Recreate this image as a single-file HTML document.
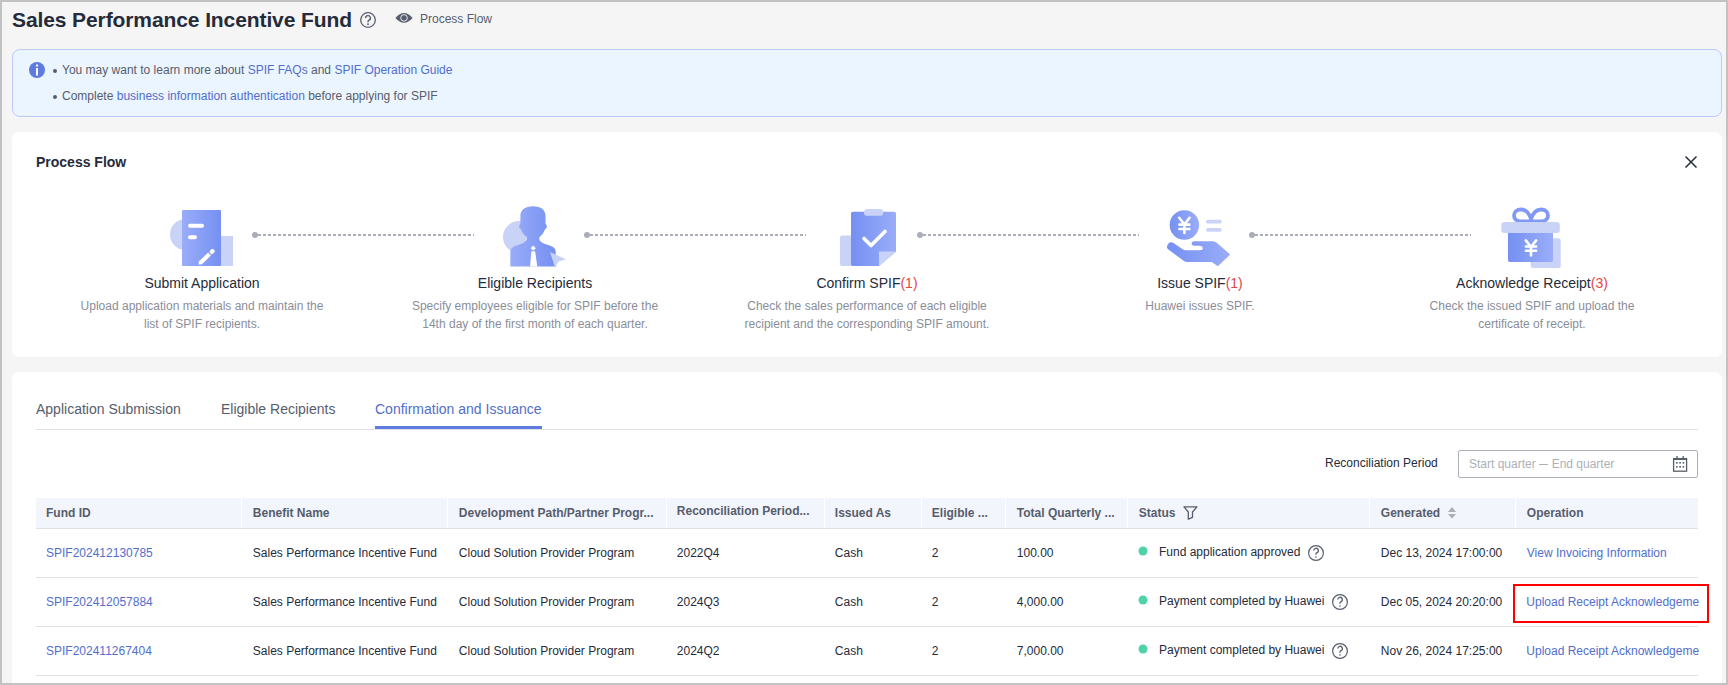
<!DOCTYPE html>
<html><head><meta charset="utf-8">
<style>
*{margin:0;padding:0;box-sizing:border-box}
html,body{width:1728px;height:685px;overflow:hidden}
body{position:relative;background:#c2c2c2;font-family:"Liberation Sans",sans-serif;color:#252b3a}
.a{position:absolute;white-space:nowrap}
#page{position:absolute;left:2px;top:2px;width:1724px;height:681px;background:#f5f5f5;overflow:hidden}
.link,.td.link{color:#526ecc}
.card{position:absolute;background:#fff;border-radius:7px}
.t12{font-size:12px;line-height:16px}
.t14{font-size:14px;line-height:18px}
.desc{position:absolute;width:250px;color:#8a8e99;font-size:12px;line-height:18px;text-align:center;white-space:normal}
.stitle{position:absolute;width:300px;font-size:14px;line-height:18px;text-align:center;color:#252b3a}
.cnt{color:#e54545}
.th{position:absolute;top:505px;font-size:12px;line-height:16px;font-weight:bold;color:#575d6c;white-space:nowrap}
.td{position:absolute;font-size:12px;line-height:16px;color:#252b3a;white-space:nowrap}
.hsep{position:absolute;top:498px;width:1px;height:30px;background:#fff}
.rline{position:absolute;left:36px;width:1662px;height:1px;background:#dfe1e6}
svg{position:absolute;left:0;top:0;overflow:visible}
</style></head>
<body>
<div id="page"></div>

<!-- ===== Header ===== -->
<div class="a" style="left:12px;top:7px;font-size:21px;line-height:26px;font-weight:bold;color:#252b3a;letter-spacing:-0.1px">Sales Performance Incentive Fund</div>
<div class="a t12" style="left:420px;top:11px;color:#575d6c">Process Flow</div>

<!-- ===== Info box ===== -->
<div class="a" style="left:12px;top:49px;width:1710px;height:68px;background:#ebf5ff;border:1px solid #bdcafa;border-radius:8px"></div>
<div class="a t12" style="left:62px;top:62px;color:#575d6c">You may want to learn more about <span class="link">SPIF FAQs</span> and <span class="link">SPIF Operation Guide</span></div>
<div class="a t12" style="left:62px;top:88px;color:#575d6c">Complete <span class="link">business information authentication</span> before applying for SPIF</div>

<!-- ===== Process flow card ===== -->
<div class="card" style="left:12px;top:132px;width:1710px;height:225px"></div>
<div class="a" style="left:36px;top:153px;font-size:14px;line-height:18px;font-weight:bold;color:#252b3a">Process Flow</div>

<div class="stitle" style="left:52px;top:274px">Submit Application</div>
<div class="desc" style="left:77px;top:297px">Upload application materials and maintain the list of SPIF recipients.</div>
<div class="stitle" style="left:385px;top:274px">Eligible Recipients</div>
<div class="desc" style="left:410px;top:297px">Specify employees eligible for SPIF before the 14th day of the first month of each quarter.</div>
<div class="stitle" style="left:717px;top:274px">Confirm SPIF<span class="cnt">(1)</span></div>
<div class="desc" style="left:742px;top:297px">Check the sales performance of each eligible recipient and the corresponding SPIF amount.</div>
<div class="stitle" style="left:1050px;top:274px">Issue SPIF<span class="cnt">(1)</span></div>
<div class="desc" style="left:1075px;top:297px">Huawei issues SPIF.</div>
<div class="stitle" style="left:1382px;top:274px">Acknowledge Receipt<span class="cnt">(3)</span></div>
<div class="desc" style="left:1407px;top:297px">Check the issued SPIF and upload the certificate of receipt.</div>

<!-- ===== Tabs card ===== -->
<div class="card" style="left:12px;top:372px;width:1710px;height:340px"></div>
<div class="a t14" style="left:36px;top:400px;color:#575d6c">Application Submission</div>
<div class="a t14" style="left:221px;top:400px;color:#575d6c">Eligible Recipients</div>
<div class="a t14" style="left:375px;top:400px;color:#526ecc">Confirmation and Issuance</div>
<div class="a" style="left:36px;top:429px;width:1662px;height:1px;background:#dfe1e6"></div>
<div class="a" style="left:375px;top:426px;width:167px;height:3px;background:#5e7ce0"></div>

<div class="a t12" style="left:1325px;top:455px;color:#252b3a">Reconciliation Period</div>
<div class="a" style="left:1458px;top:450px;width:240px;height:28px;border:1px solid #adb0b8;border-radius:2px"></div>
<div class="a t12" style="left:1469px;top:456px;color:#adb0b8">Start quarter <span style="display:inline-block;width:9.3px;height:1px;background:#adb0b8;vertical-align:3.5px"></span> End quarter</div>

<!-- table header -->
<div class="a" style="left:36px;top:498px;width:1662px;height:30px;background:#f2f5fc"></div>
<div class="a" style="left:36px;top:528px;width:1662px;height:1px;background:#dfe1e6"></div>
<div class="hsep" style="left:241px"></div>
<div class="hsep" style="left:447px"></div>
<div class="hsep" style="left:666px"></div>
<div class="hsep" style="left:824px"></div>
<div class="hsep" style="left:921px"></div>
<div class="hsep" style="left:1005px"></div>
<div class="hsep" style="left:1127px"></div>
<div class="hsep" style="left:1369px"></div>
<div class="hsep" style="left:1515px"></div>

<div class="th" style="left:46px">Fund ID</div>
<div class="th" style="left:252.8px">Benefit Name</div>
<div class="th" style="left:458.8px">Development Path/Partner Progr...</div>
<div class="th" style="left:676.8px;top:503px">Reconciliation Period...</div>
<div class="th" style="left:834.8px">Issued As</div>
<div class="th" style="left:931.8px">Eligible ...</div>
<div class="th" style="left:1016.8px">Total Quarterly ...</div>
<div class="th" style="left:1138.8px">Status</div>
<div class="th" style="left:1380.8px">Generated</div>
<div class="th" style="left:1526.8px">Operation</div>

<!-- rows -->
<div class="rline" style="top:577px"></div>
<div class="rline" style="top:626px"></div>
<div class="rline" style="top:675px"></div>

<div class="td link" style="left:46px;top:545px">SPIF202412130785</div>
<div class="td" style="left:252.8px;top:545px">Sales Performance Incentive Fund</div>
<div class="td" style="left:458.8px;top:545px">Cloud Solution Provider Program</div>
<div class="td" style="left:676.8px;top:545px">2022Q4</div>
<div class="td" style="left:834.8px;top:545px">Cash</div>
<div class="td" style="left:931.8px;top:545px">2</div>
<div class="td" style="left:1016.8px;top:545px">100.00</div>
<div class="td" style="left:1159px;top:544px">Fund application approved</div>
<div class="td" style="left:1380.8px;top:545px">Dec 13, 2024 17:00:00</div>
<div class="td link" style="left:1526.8px;top:545px">View Invoicing Information</div>

<div class="td link" style="left:46px;top:594px">SPIF202412057884</div>
<div class="td" style="left:252.8px;top:594px">Sales Performance Incentive Fund</div>
<div class="td" style="left:458.8px;top:594px">Cloud Solution Provider Program</div>
<div class="td" style="left:676.8px;top:594px">2024Q3</div>
<div class="td" style="left:834.8px;top:594px">Cash</div>
<div class="td" style="left:931.8px;top:594px">2</div>
<div class="td" style="left:1016.8px;top:594px">4,000.00</div>
<div class="td" style="left:1159px;top:593px">Payment completed by Huawei</div>
<div class="td" style="left:1380.8px;top:594px">Dec 05, 2024 20:20:00</div>
<div class="a" style="left:1526.3px;top:594px;width:173px;overflow:hidden;font-size:12px;line-height:16px"><span class="link">Upload Receipt Acknowledgement</span></div>

<div class="td link" style="left:46px;top:643px">SPIF202411267404</div>
<div class="td" style="left:252.8px;top:643px">Sales Performance Incentive Fund</div>
<div class="td" style="left:458.8px;top:643px">Cloud Solution Provider Program</div>
<div class="td" style="left:676.8px;top:643px">2024Q2</div>
<div class="td" style="left:834.8px;top:643px">Cash</div>
<div class="td" style="left:931.8px;top:643px">2</div>
<div class="td" style="left:1016.8px;top:643px">7,000.00</div>
<div class="td" style="left:1159px;top:642px">Payment completed by Huawei</div>
<div class="td" style="left:1380.8px;top:643px">Nov 26, 2024 17:25:00</div>
<div class="a" style="left:1526.3px;top:643px;width:173px;overflow:hidden;font-size:12px;line-height:16px"><span class="link">Upload Receipt Acknowledgement</span></div>

<!-- red highlight -->
<div class="a" style="left:1513px;top:584px;width:196px;height:39px;border:2px solid #f00"></div>

<!-- ===== SVG overlay (icons) ===== -->
<svg width="1728" height="685" viewBox="0 0 1728 685">
<defs>
<linearGradient id="gL" x1="0" y1="0" x2="1" y2="0"><stop offset="0" stop-color="#9aadf9"/><stop offset="1" stop-color="#7590f2"/></linearGradient>
<linearGradient id="gR" x1="0" y1="0" x2="1" y2="0"><stop offset="0" stop-color="#7590f2"/><stop offset="1" stop-color="#9aadf9"/></linearGradient>
</defs>
<!-- title help icon -->
<circle cx="368" cy="20" r="7.3" fill="none" stroke="#575d6c" stroke-width="1.3"/>
<path d="M365.6 18a2.4 2.4 0 1 1 3.4 2.2c-.7.4-1 .8-1 1.6v.5" fill="none" stroke="#575d6c" stroke-width="1.4"/>
<rect x="367.2" y="23.4" width="1.6" height="1.6" fill="#575d6c"/>
<!-- eye -->
<path d="M395.4 17.9Q404 8.3 412.6 17.9Q404 27.5 395.4 17.9Z" fill="#575d6c"/>
<circle cx="404" cy="17.9" r="3.3" fill="none" stroke="#eaebef" stroke-width="1"/>
<circle cx="404" cy="17.9" r="2.2" fill="#575d6c"/>
<!-- info icon -->
<circle cx="37" cy="70" r="8" fill="#5e7ce0"/>
<rect x="36" y="64.5" width="2" height="2" fill="#fff"/>
<rect x="36" y="68" width="2" height="7.5" fill="#fff"/>
<circle cx="55" cy="71" r="2" fill="#575d6c"/>
<circle cx="55" cy="97" r="2" fill="#575d6c"/>

<!-- close X -->
<path d="M1685.5 156.5l11 11M1696.5 156.5l-11 11" stroke="#252b3a" stroke-width="1.5"/>

<!-- connectors -->
<g fill="#abaeb9">
<circle cx="255" cy="235" r="3"/><circle cx="587" cy="235" r="3"/><circle cx="920" cy="235" r="3"/><circle cx="1252" cy="235" r="3"/>
</g>
<g stroke="#abaeb9" stroke-width="2" stroke-dasharray="3 2">
<path d="M258 235H474"/><path d="M590 235H806"/><path d="M923 235H1139"/><path d="M1255 235H1471"/>
</g>

<!-- icon 1: submit application -->
<circle cx="185.5" cy="234.5" r="15.5" fill="#c9d3f8"/>
<rect x="221" y="236" width="12" height="30" fill="#c9d3f8"/>
<rect x="182" y="210" width="39" height="56" rx="1" fill="url(#gL)"/>
<rect x="188" y="223.8" width="16" height="4" rx="2" fill="#fff"/>
<rect x="188" y="235.2" width="9" height="4" rx="2" fill="#fff"/>
<g transform="translate(198.6 264.6) rotate(-44)" fill="#fff"><path d="M0 0L2.6-2.1H15.2V2.1H2.6Z"/><rect x="16.4" y="-2.1" width="5" height="4.2" rx="1.4"/></g>


<!-- icon 2: person -->
<circle cx="519" cy="237" r="16" fill="#c9d3f8"/>
<path d="M520.4 216C520.4 210 525 206.3 533 206.3S545.5 210 545.5 216V224C546.5 224.5 547 225.5 546.8 227 546.5 228.3 545.8 229 545 229.2 543.8 232.8 541.5 235.5 539.3 237.3V240C541 242 544 244 548 245 553 246.3 555.7 248.5 555.7 252V266.4H510.3V252C510.3 248.5 513 246.3 518 245 522 244 525 242 527 240V237.3C524.5 235.5 522.2 232.8 521 229.2 520.2 229 519.5 228.3 519.2 227 519 225.5 519.5 224.5 520.4 224Z" fill="url(#gL)"/>
<path d="M533.2 245.6L535.8 248.3 533.2 250.4 530.6 248.3Z" fill="#fff"/><path d="M531.3 251.2H535.1L537.3 266.4H530.1Z" fill="#fff"/>
<path d="M550.1 252.1L565.9 259.2 558.2 261.8 555.2 267.9Z" fill="#c9d3f8"/>

<!-- icon 3: clipboard -->
<rect x="840" y="235.6" width="14" height="30.4" rx="2" fill="#c9d3f8"/>
<path d="M853 211.7h41c1.2 0 2 .8 2 2v38l-17 14.3h-26c-1.2 0-2-.8-2-2v-50.3c0-1.2.8-2 2-2z" fill="url(#gR)"/>
<path d="M879 251.6h17l-17 14.4z" fill="#c9d3f8"/>
<rect x="864" y="209" width="19.3" height="6.8" rx="3.4" fill="#c9d3f8"/>
<path d="M864 238.5l7 7 14-14" fill="none" stroke="#fff" stroke-width="3.6" stroke-linecap="round" stroke-linejoin="round"/>

<!-- icon 4: hand + coin -->
<circle cx="1184.4" cy="225" r="14.7" fill="url(#gR)"/>
<path d="M1179.2 217.8l5.2 6.6 5.2-6.6M1184.4 224.4v8.6M1179.4 224.6h10M1179.4 229h10" fill="none" stroke="#fff" stroke-width="2.6" stroke-linecap="round"/>
<rect x="1206" y="219.7" width="15.7" height="3.9" rx="1.95" fill="#c9d3f8"/>
<rect x="1206" y="227.9" width="15.7" height="3.9" rx="1.95" fill="#c9d3f8"/>
<path d="M1168.5 243.2c1.5-1.2 3.8-1.2 5.4 0l8.8 6c1 .7 2 1.1 3.2 1.1h13.6c2 0 3.3-1 3.3-2.3s-1.3-2.3-3.3-2.3h-5.5c-1.4 0-2.4-1.2-2.4-2.3s1-2.2 2.4-2.2h18.5c1.6 0 3 .6 4.2 1.6l13.5 11.8-12.4 11.7-6-4.2h-24.7c-1.1 0-2.2-.4-3.1-1l-15.6-11.6c-1.8-1.3-2-3.8-.1-5.3z" fill="url(#gR)"/>

<!-- icon 5: gift -->
<rect x="1530.7" y="238.2" width="30" height="29.8" rx="2.5" fill="#c9d3f8"/>
<path d="M1531 219c-2-6-5.5-9.5-10-9.5-4 0-7 2.6-7 6 0 3.5 3 6 7 6h10zM1531 219c2-6 5.5-9.5 10-9.5 4 0 7 2.6 7 6 0 3.5-3 6-7 6h-10z" fill="none" stroke="#8199f4" stroke-width="3.8"/>
<rect x="1501.3" y="222" width="58.5" height="11" rx="3" fill="#c9d3f8"/>
<path d="M1508 233h45v27c0 1.2-.8 2-2 2h-41c-1.2 0-2-.8-2-2z" fill="url(#gR)"/>
<path d="M1525.8 240.4l5.2 6.6 5.2-6.6M1531 247v8.4M1525.9 246.5h10.2M1525.9 250.8h10.2" fill="none" stroke="#fff" stroke-width="2.6" stroke-linecap="round"/>

<!-- date picker calendar -->
<rect x="1673.6" y="458.6" width="13" height="12.6" fill="none" stroke="#575d6c" stroke-width="1.3"/>
<path d="M1677 456v3.5M1683.2 456v3.5" stroke="#575d6c" stroke-width="1.3"/><rect x="1673" y="458" width="14" height="2" fill="#575d6c"/>
<g fill="#575d6c"><rect x="1676" y="462" width="1.6" height="1.6"/><rect x="1679.3" y="462" width="1.6" height="1.6"/><rect x="1682.6" y="462" width="1.6" height="1.6"/><rect x="1676" y="466" width="1.6" height="1.6"/><rect x="1679.3" y="466" width="1.6" height="1.6"/><rect x="1682.6" y="466" width="1.6" height="1.6"/></g>

<!-- filter -->
<path d="M1184 506.8h13l-4.5 5.2v5.3l-4.2 1.9V512z" fill="none" stroke="#575d6c" stroke-width="1.3" stroke-linejoin="round"/>
<!-- sort -->
<path d="M1452 507l4 4.9h-8zM1452 518.6l4-4.6h-8z" fill="#abaeb8"/>

<!-- status dots & help -->
<circle cx="1143" cy="551" r="4.5" fill="#50d2a7"/>
<circle cx="1143" cy="600" r="4.5" fill="#50d2a7"/>
<circle cx="1143" cy="649" r="4.5" fill="#50d2a7"/>
<g fill="none" stroke="#575d6c" stroke-width="1.2">
<circle cx="1316" cy="553" r="7.4"/>
<circle cx="1340" cy="602" r="7.4"/>
<circle cx="1340" cy="651" r="7.4"/>
</g>
<g fill="none" stroke="#575d6c" stroke-width="1.3">
<path d="M1313.8 550.6a2.3 2.3 0 1 1 3.2 2.1c-.7.3-1 .8-1 1.5v.6"/>
<path d="M1337.8 599.6a2.3 2.3 0 1 1 3.2 2.1c-.7.3-1 .8-1 1.5v.6"/>
<path d="M1337.8 648.6a2.3 2.3 0 1 1 3.2 2.1c-.7.3-1 .8-1 1.5v.6"/>
</g>
<g fill="#575d6c"><circle cx="1316" cy="557" r=".8"/><circle cx="1340" cy="606" r=".8"/><circle cx="1340" cy="655" r=".8"/></g>
</svg>
<div class="a" style="left:0;top:0;width:1728px;height:685px;border:2px solid #c2c2c2;border-top-width:2px"></div>
</body></html>
